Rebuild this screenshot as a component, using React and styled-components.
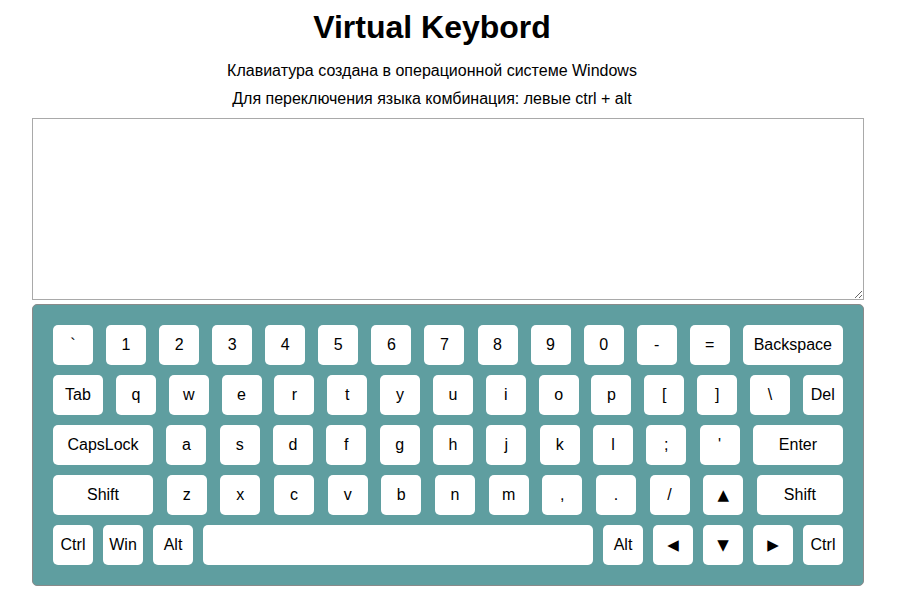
import React from "react";
import styled, { createGlobalStyle } from "styled-components";

const rows = [
  [
    { label: "`" }, { label: "1" }, { label: "2" }, { label: "3" }, { label: "4" },
    { label: "5" }, { label: "6" }, { label: "7" }, { label: "8" }, { label: "9" },
    { label: "0" }, { label: "-" }, { label: "=" }, { label: "Backspace", w: 100 }
  ],
  [
    { label: "Tab", w: 50 }, { label: "q" }, { label: "w" }, { label: "e" }, { label: "r" },
    { label: "t" }, { label: "y" }, { label: "u" }, { label: "i" }, { label: "o" },
    { label: "p" }, { label: "[" }, { label: "]" }, { label: "\\" }, { label: "Del" }
  ],
  [
    { label: "CapsLock", w: 100 }, { label: "a" }, { label: "s" }, { label: "d" },
    { label: "f" }, { label: "g" }, { label: "h" }, { label: "j" }, { label: "k" },
    { label: "l" }, { label: ";" }, { label: "'" }, { label: "Enter", w: 90 }
  ],
  [
    { label: "Shift", w: 100 }, { label: "z" }, { label: "x" }, { label: "c" },
    { label: "v" }, { label: "b" }, { label: "n" }, { label: "m" }, { label: "," },
    { label: "." }, { label: "/" }, { label: "▲", arrow: true }, { label: "Shift", w: 86 }
  ],
  [
    { label: "Ctrl" }, { label: "Win" }, { label: "Alt" }, { label: "", w: 390 },
    { label: "Alt" }, { label: "◀", arrow: true }, { label: "▼", arrow: true },
    { label: "▶", arrow: true }, { label: "Ctrl" }
  ]
];

export default function App() {
  return (
    <>
      <GlobalStyle />
      <Page>
        <Header>
          <Title>Virtual Keybord</Title>
          <Note>Клавиатура создана в операционной системе Windows</Note>
          <Note>Для переключения языка комбинация: левые ctrl + alt</Note>
        </Header>
        <TextArea />
        <Keyboard>
          {rows.map((row, i) => (
            <Row key={i}>
              {row.map((k, j) => (
                <Key key={j} $w={k.w} $arrow={k.arrow}>
                  {k.label}
                </Key>
              ))}
            </Row>
          ))}
        </Keyboard>
      </Page>
    </>
  );
}

const GlobalStyle = createGlobalStyle`
  body {
    margin: 0;
    background: #fff;
    font-family: "Liberation Sans", Arial, sans-serif;
    color: #000;
  }
`;

const Page = styled.div`
  width: 832px;
  margin-left: 32px;
  padding-top: 9px;
`;

const Header = styled.div`
  padding-right: 32px;
  text-align: center;
  margin-bottom: 5px;
`;

const Title = styled.h1`
  margin: 0 0 11px 0;
  font-size: 32px;
  line-height: 37px;
  font-weight: bold;
`;

const Note = styled.p`
  margin: 0;
  font-size: 16px;
  line-height: 28px;
`;

const TextArea = styled.textarea`
  display: block;
  box-sizing: border-box;
  width: 832px;
  height: 182px;
  margin: 0 0 4px 0;
  border: 1px solid #a9a9a9;
  font-family: "Liberation Mono", monospace;
`;

const Keyboard = styled.div`
  box-sizing: border-box;
  width: 832px;
  padding: 20px;
  border: 1px solid #8a8a8a;
  border-radius: 5px;
  background: #5f9ea0;
  display: flex;
  flex-direction: column;
  gap: 10px;
`;

const Row = styled.div`
  display: flex;
  justify-content: space-between;
`;

const Key = styled.div`
  width: ${(p) => p.$w || 40}px;
  height: 40px;
  border-radius: 5px;
  background: #fff;
  display: flex;
  align-items: center;
  justify-content: center;
  font-size: ${(p) => (p.$arrow ? "15px" : "16px")};
  font-family: ${(p) =>
    p.$arrow ? '"DejaVu Sans", sans-serif' : '"Liberation Sans", Arial, sans-serif'};
  color: #000;
`;
